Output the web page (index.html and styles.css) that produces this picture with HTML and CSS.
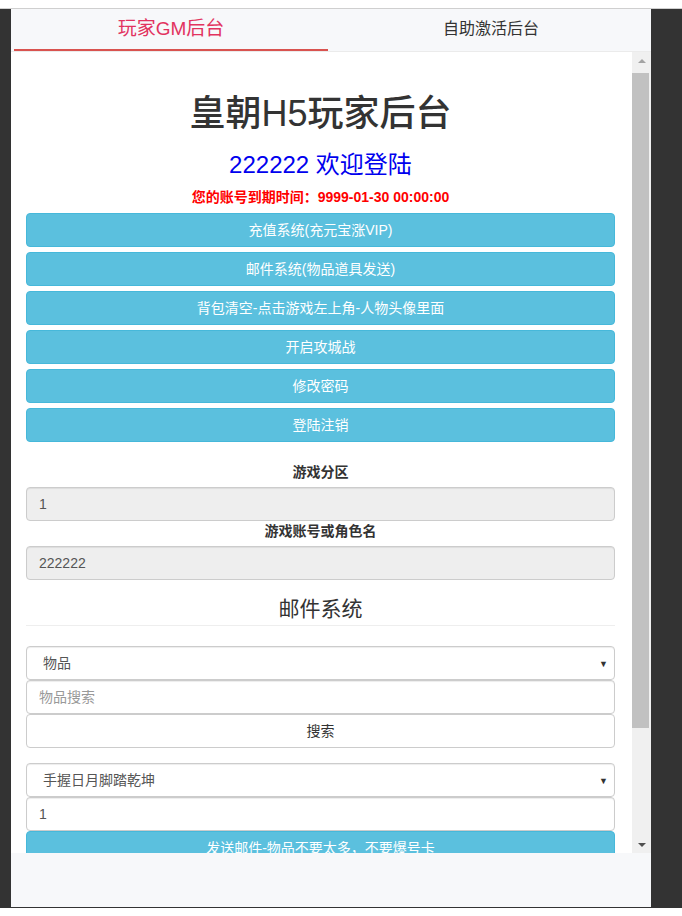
FILE: index.html
```html
<!DOCTYPE html>
<html lang="zh-CN">
<head>
  <meta charset="UTF-8">
  <meta name="viewport" content="width=device-width, initial-scale=1.0">
  <title>皇朝H5玩家后台</title>
  <link rel="stylesheet" href="styles.css">
</head>
<body>
  <div class="device">
    <div class="phone">
      <div class="tabs">
        <div class="tab active">玩家GM后台</div>
        <div class="tab">自助激活后台</div>
      </div>

      <div class="viewport">
        <div class="content">
          <h1 class="title">皇朝H5玩家后台</h1>
          <h3 class="welcome">222222 欢迎登陆</h3>
          <p class="expire">您的账号到期时间：9999-01-30 00:00:00</p>

          <div class="menu">
            <button class="btn btn-info">充值系统(充元宝涨VIP)</button>
            <button class="btn btn-info">邮件系统(物品道具发送)</button>
            <button class="btn btn-info">背包清空-点击游戏左上角-人物头像里面</button>
            <button class="btn btn-info">开启攻城战</button>
            <button class="btn btn-info">修改密码</button>
            <button class="btn btn-info">登陆注销</button>
          </div>

          <div class="form-group">
            <label class="field-label">游戏分区</label>
            <input class="form-control" type="text" value="1" disabled>
            <label class="field-label">游戏账号或角色名</label>
            <input class="form-control" type="text" value="222222" disabled>
          </div>

          <h4 class="section-title">邮件系统</h4>

          <div class="stack">
            <div class="select-wrap">
              <select class="form-control select">
                <option>物品</option>
              </select>
              <span class="select-arrow">▼</span>
            </div>
            <input class="form-control" type="text" placeholder="物品搜索">
            <button class="btn btn-default">搜索</button>
          </div>

          <div class="stack">
            <div class="select-wrap">
              <select class="form-control select">
                <option>手握日月脚踏乾坤</option>
              </select>
              <span class="select-arrow">▼</span>
            </div>
            <input class="form-control" type="text" value="1">
            <button class="btn btn-info">发送邮件-物品不要太多，不要爆号卡</button>
          </div>
        </div>

        <div class="scrollbar">
          <div class="scroll-btn"><span class="arrow-up"></span></div>
          <div class="scroll-thumb"></div>
          <div class="scroll-btn"><span class="arrow-down"></span></div>
        </div>
      </div>
    </div>
  </div>
</body>
</html>
```

FILE: styles.css
```css
body {
  margin: 0;
  padding: 0;
  background-color: #ffffff;
  font-family: "Liberation Sans", "Noto Sans CJK SC", sans-serif;
  font-size: 14px;
  line-height: 20px;
  color: #333;
}

/* moldura escura em volta do celular */
.device {
  margin-top: 8px;
  border-top: 1px solid #cfcfcf;
  background-color: #333;
  padding: 0 31px 1px 11px;
}

.phone {
  height: 898px;
  background-color: #f7f8fa;
  display: flex;
  flex-direction: column;
}

.tabs {
  display: flex;
  height: 42px;
  border-bottom: 1px solid #ebebeb;
}

.tab {
  flex: 1;
  text-align: center;
  font-size: 16px;
  line-height: 40px;
  color: #333;
  border-bottom: 2px solid transparent;
  margin: 0 3px;
}

.tab.active {
  font-size: 19px;
  color: #e2335f;
  border-bottom-color: #d9534f;
}

.viewport {
  display: flex;
  height: 801px;
}

.content {
  flex: 1;
  background-color: #ffffff;
  overflow: hidden;
  padding: 42px 17px 0 15px;
}

.title {
  margin: 0 0 18px;
  font-size: 36px;
  line-height: 1.1;
  font-weight: 500;
  text-align: center;
}

.welcome {
  margin: 0 0 9px;
  font-size: 24px;
  line-height: 1.1;
  font-weight: normal;
  color: #0000ee;
  text-align: center;
}

.expire {
  margin: 0 0 6px;
  font-weight: bold;
  color: #ff0000;
  text-align: center;
}

.menu {
  display: flex;
  flex-direction: column;
  gap: 5px;
}

.btn {
  display: block;
  box-sizing: border-box;
  width: 100%;
  height: 34px;
  padding: 6px 12px;
  font-family: inherit;
  font-size: 14px;
  line-height: 20px;
  border: 1px solid transparent;
  border-radius: 4px;
  cursor: pointer;
}

.btn-info {
  background-color: #5bc0de;
  border-color: #46b8da;
  color: #fff;
}

.btn-default {
  background-color: #fff;
  border-color: #ccc;
  color: #333;
}

.form-group {
  margin-top: 20px;
}

.field-label {
  display: block;
  text-align: center;
  font-weight: bold;
  margin-bottom: 5px;
}

.form-control {
  display: block;
  width: 100%;
  height: 34px;
  box-sizing: border-box;
  padding: 6px 12px;
  font-family: inherit;
  font-size: 14px;
  line-height: 20px;
  color: #555;
  background-color: #fff;
  border: 1px solid #ccc;
  border-radius: 4px;
  box-shadow: inset 0 1px 1px rgba(0, 0, 0, 0.075);
}

.form-control:disabled {
  background-color: #eee;
}

.form-control::placeholder {
  color: #999;
}

.section-title {
  margin: 18px 0 20px;
  padding-bottom: 5px;
  border-bottom: 1px solid #eee;
  font-size: 21px;
  line-height: 22px;
  font-weight: normal;
  color: #333;
  text-align: center;
}

.stack {
  margin-bottom: 15px;
}

.select-wrap {
  position: relative;
}

.select {
  appearance: none;
  padding-left: 16px;
}

.select-arrow {
  position: absolute;
  right: 7px;
  top: 8px;
  font-size: 9px;
  color: #333;
}

/* barra de rolagem desenhada */
.scrollbar {
  width: 19px;
  background-color: #f0f0f0;
  display: flex;
  flex-direction: column;
}

.scroll-btn {
  height: 17px;
  display: flex;
  justify-content: center;
  align-items: center;
}

.arrow-up {
  border-left: 4px solid transparent;
  border-right: 4px solid transparent;
  border-bottom: 4px solid #a3a3a3;
}

.arrow-down {
  border-left: 4px solid transparent;
  border-right: 4px solid transparent;
  border-top: 4px solid #505050;
}

.scroll-thumb {
  margin: 4px 2px 0 0;
  height: 655px;
  background-color: #c1c1c1;
}

.scroll-thumb + .scroll-btn {
  margin-top: auto;
}
```
